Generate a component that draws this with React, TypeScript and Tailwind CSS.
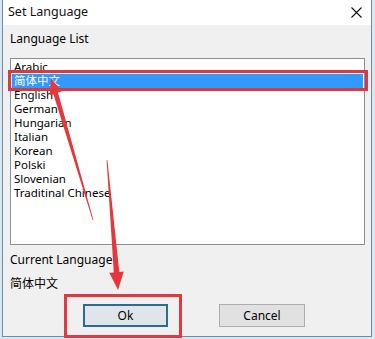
import React from "react";

const items = [
  "Arabic",
  "简体中文",
  "English",
  "German",
  "Hungarian",
  "Italian",
  "Korean",
  "Polski",
  "Slovenian",
  "Traditinal Chinese",
];

const font = { fontFamily: '"Noto Sans", "Noto Sans CJK SC", sans-serif' };

export default function App() {
  return (
    <div
      className="relative w-[375px] h-[339px] overflow-hidden bg-[#d9e7f1] text-[#000]"
      style={font}
    >
      <div className="ml-[2px] w-[370px] h-[337px] border-x border-b border-[#6d8da5] flex flex-col">
        {/* title bar */}
        <div className="h-[25px] bg-white flex items-center justify-between pl-[5px] pr-[9px]">
          <span className="text-[12.5px] leading-none text-[#111]">Set Language</span>
          <svg width="11" height="11" viewBox="0 0 11 11">
            <path d="M0.5 0.5 L10.5 10.5 M10.5 0.5 L0.5 10.5" stroke="#111" strokeWidth="1.1" />
          </svg>
        </div>
        {/* body */}
        <div className="flex-1 bg-[#f0f0f0] pl-[7px] pr-[5px] flex flex-col">
          <div className="h-[33px] pt-[6px] text-[12px] leading-[16px]">Language List</div>
          <div className="w-[355px] h-[187px] border border-[#8a8f96] bg-white pt-[1px]">
            {items.map((it, i) => (
              <div
                key={it}
                className={
                  i === 1
                    ? "mx-[1px] h-[14px] pl-[2px] text-[11.5px] leading-[14px] bg-[#3399ff] text-white"
                    : "mx-[1px] h-[14px] pl-[2px] text-[11.5px] leading-[14px]"
                }
              >
                {it}
              </div>
            ))}
          </div>
          <div className="mt-[7px] text-[12px] leading-[16px]">Current Language</div>
          <div className="mt-[8px] text-[12px] leading-[16px]">简体中文</div>
          <div className="mt-[12px] flex">
            <div className="ml-[73px] w-[85px] h-[23px] border-2 border-[#2b6c90] bg-[#e0e5ea] flex items-center justify-center text-[12px]">
              Ok
            </div>
            <div className="ml-[51px] w-[86px] h-[23px] border border-[#adadad] bg-[#e1e1e1] flex items-center justify-center text-[12px]">
              Cancel
            </div>
          </div>
        </div>
      </div>

      {/* annotations */}
      <div className="absolute left-[8px] top-[70px] w-[360px] h-[21px] border-[3px] border-[#d83a40]" />
      <div className="absolute left-[64px] top-[294px] w-[118px] h-[44px] border-[3px] border-[#e0393f]" />
      <svg className="absolute left-0 top-0" width="375" height="339" viewBox="0 0 375 339">
        <polygon points="51,78 61.5,91.6 58,92.6 93.4,220 92.6,220 53.5,94.4 49.7,95" fill="#e5383d" />
        <polygon points="106.6,160 107.4,160 119.3,272 123.8,271.5 118,290 109.3,272.7 113.8,272.4" fill="#e5383d" />
      </svg>
    </div>
  );
}
